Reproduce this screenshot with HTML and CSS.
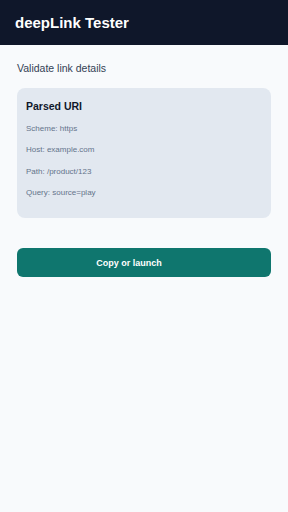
FILE: index.html
```html
<!DOCTYPE html>
<html lang="en">
  <head>
    <meta charset="UTF-8" />
    <meta name="viewport" content="width=device-width, initial-scale=1.0" />
    <title>deepLink Tester</title>
    <link rel="stylesheet" href="styles.css">
  </head>
  <body>
    <header class="topbar">
      <h1>deepLink Tester</h1>
    </header>
    <div class="container">
      <p class="subtitle">Validate link details</p>
      <div class="card">
        <h2>Parsed URI</h2>
        <div class="line">Scheme: https</div>
        <div class="line">Host: example.com</div>
        <div class="line">Path: /product/123</div>
        <div class="line">Query: source=play</div>
      </div>
      <button class="btn">Copy or launch</button>
    </div>
  </body>
</html>
```

FILE: styles.css
```css
* {
  margin: 0;
  padding: 0;
  box-sizing: border-box;
}
body {
  font-family: "Liberation Sans", Arial, sans-serif;
  background: #f8fafc;
  width: 288px;
  height: 512px;
}
.topbar {
  height: 45px;
  background: #0f172a;
  display: flex;
  align-items: center;
  padding-left: 15px;
}
.topbar h1 {
  color: #fff;
  font-size: 15px;
  font-weight: bold;
}
.container {
  padding: 16px 17px;
}
.subtitle {
  font-size: 10.5px;
  line-height: 14px;
  color: #334155;
}
.card {
  margin-top: 13px;
  background: #e2e8f0;
  border-radius: 8px;
  padding: 11px 9px 15px;
}
.card h2 {
  font-size: 10.5px;
  line-height: 14px;
  color: #0f172a;
  margin-bottom: 5px;
}
.line {
  font-size: 8px;
  line-height: 21.3px;
  color: #64748b;
}
.btn {
  margin-top: 30px;
  width: 100%;
  height: 29px;
  padding-right: 30px;
  border: unset;
  outline: unset;
  background: #0f766e;
  color: #fff;
  border-radius: 6px;
  font-family: inherit;
  font-size: 9px;
  font-weight: bold;
  cursor: pointer;
}
```
